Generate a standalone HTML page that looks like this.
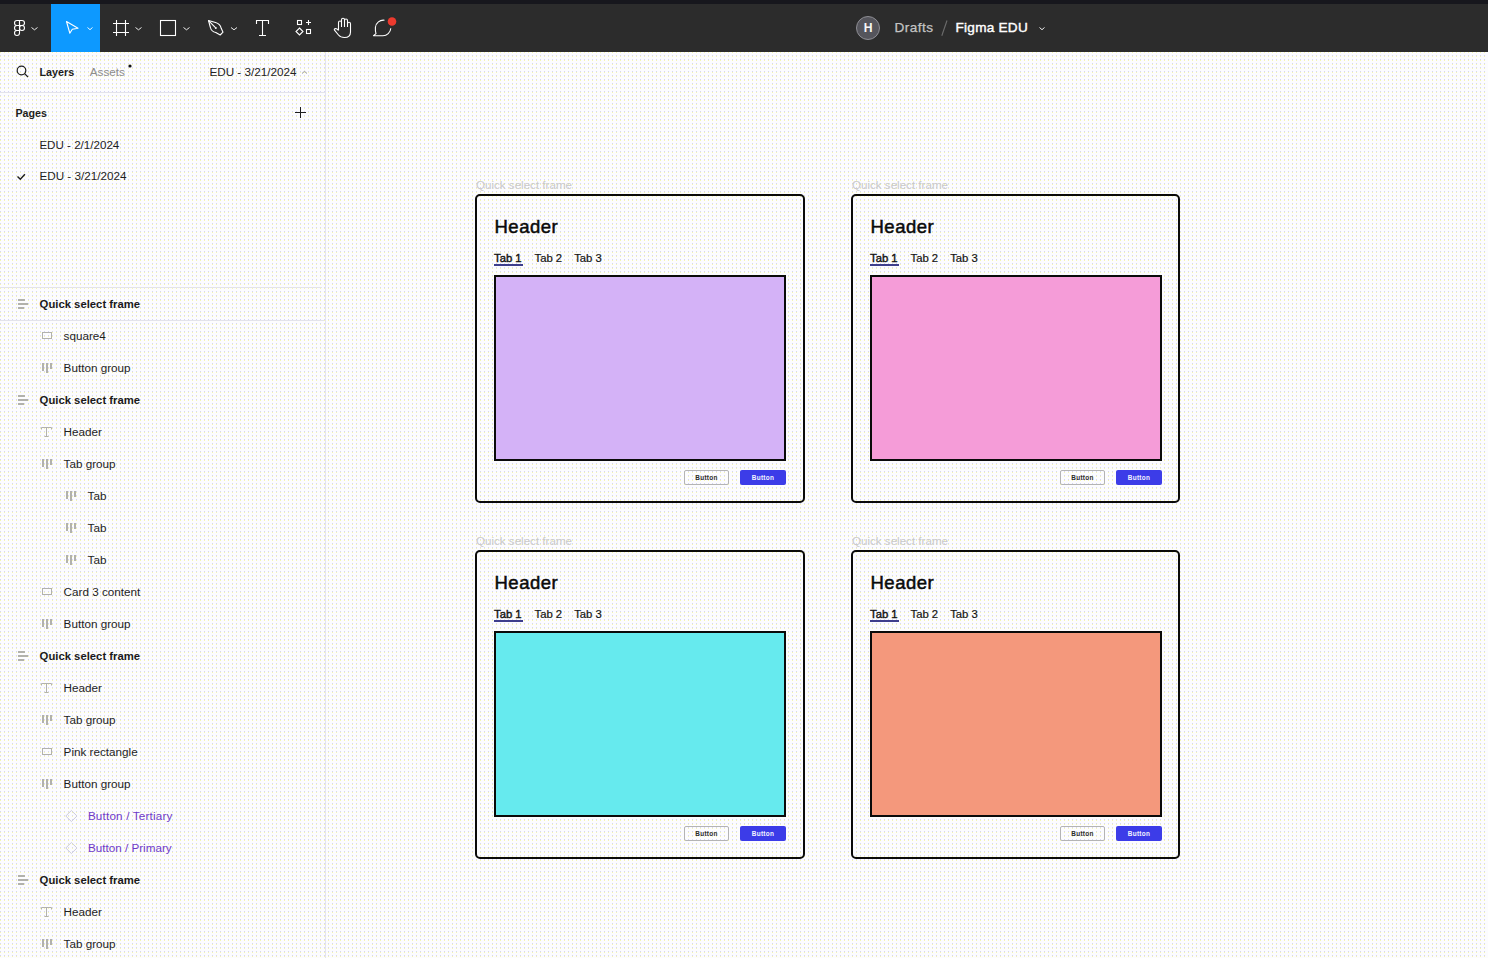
<!DOCTYPE html>
<html><head><meta charset="utf-8">
<style>
*{margin:0;padding:0;box-sizing:border-box}
html,body{width:1488px;height:958px;overflow:hidden;background:#fcfcfe;font-family:"Liberation Sans",sans-serif;position:relative}
.abs{position:absolute}
.t{position:absolute;white-space:nowrap;line-height:1}
.hl{position:absolute;height:1px;background:#e3e3ea}
.card{position:absolute;width:330px;height:310px;border:2px solid #0a0a0a;border-radius:5px}
.hdr{position:absolute;white-space:nowrap;font-size:18.5px;font-weight:normal;-webkit-text-stroke:.5px #0a0a0a;color:#0a0a0a;line-height:1;letter-spacing:.5px}
.tab{position:absolute;white-space:nowrap;font-size:11.3px;color:#141414;line-height:1;-webkit-text-stroke:.2px #141414}
.tab.b1{-webkit-text-stroke:.4px #141414}
.ul{position:absolute;width:29px;height:1.5px;background:#3e3e8c}
.rect{position:absolute;width:292px;height:186px;border:2px solid #0a0a0a}
.btn3{position:absolute;width:45px;height:15px;border:1px solid #b4b4b4;border-radius:2px;background:transparent;font-size:6.4px;font-weight:bold;color:#2a2a2a;text-align:center;line-height:13px;letter-spacing:.3px}
.btn1{position:absolute;width:46px;height:15px;background:#3c3ce8;border-radius:2px;font-size:6.4px;font-weight:bold;color:#f4f4ff;text-align:center;line-height:15px;letter-spacing:.3px}
</style></head><body>
<svg class="abs" style="left:0;top:0" width="1488" height="958">
<defs><pattern id="dz" x="0" y="0" width="4" height="4" patternUnits="userSpaceOnUse">
<rect x="0" y="3" width="1" height="1" fill="#d4d4f6"/><rect x="0" y="0" width="1" height="1" fill="#f6f6b0"/>
</pattern></defs>
<rect x="0" y="0" width="1488" height="958" fill="url(#dz)"/>
</svg>
<div class="abs" style="left:0;top:0;width:1488px;height:52px;background:#2c2c2c"></div>
<div class="abs" style="left:0;top:0;width:1488px;height:4px;background:#17171d"></div>
<div class="abs" style="left:51px;top:4px;width:49px;height:48px;background:#0d99ff"></div>
<svg class="abs" style="left:0;top:0" width="1488" height="52" fill="none" stroke="#fff" stroke-width="1.1">
<!-- figma logo -->
<path d="M19.5,20.5H17a2.5,2.5 0 0 0 0,5H19.5Z"/>
<path d="M19.5,20.5H22a2.5,2.5 0 0 1 0,5H19.5Z"/>
<path d="M19.5,25.5H17a2.5,2.5 0 0 0 0,5H19.5Z"/>
<circle cx="22" cy="28" r="2.5"/>
<path d="M19.5,30.5H17a2.5,2.5 0 1 0 2.5,2.5Z"/>
<path d="M31.5,27.5l3,2.3l3,-2.3" stroke-width=".9"/>
<!-- select arrow -->
<path d="M66.5,21.5L78,28.3L72.3,29.3L69.8,33.2Z" stroke-linejoin="round"/>
<path d="M87.5,27.5l2.5,2.2l2.5,-2.2" stroke-width=".9"/>
<!-- frame -->
<path d="M116.5,20V36M125.5,20V36M113,23.5H129M113,32.5H129"/>
<path d="M135.5,27.5l3,2.3l3,-2.3" stroke-width=".9"/>
<!-- rect -->
<rect x="160.5" y="20.5" width="15" height="15"/>
<path d="M183.5,27.5l3,2.3l3,-2.3" stroke-width=".9"/>
<!-- pen -->
<path d="M208.5,20.5L215.5,22.5Q220.3,24 221.2,28.3L223,32.2L220.2,35L215.8,32.5Q211.3,31.5 210.4,27.5Z" stroke-linejoin="round"/>
<path d="M208.8,20.8L215.2,27.3"/>
<circle cx="215.8" cy="28" r="1" fill="#fff" stroke="none"/>
<path d="M231,27.5l3,2.3l3,-2.3" stroke-width=".9"/>
<!-- text tool -->
<path d="M256.5,24V20.5H268.5V24M262.5,20.5V35.5M259,35.5H266"/>
<!-- resources -->
<rect x="297.5" y="20.5" width="4" height="4"/>
<path d="M308.5,20V25M306,22.5H311"/>
<path d="M299.5,28L303,31.5L299.5,35L296,31.5Z"/>
<rect x="306.5" y="29.5" width="4" height="4"/>
<!-- hand -->
<path d="M338.5,30.5V22.5a1.5,1.5 0 0 1 3,0V27M341.5,27V19.8a1.5,1.5 0 0 1 3,0V27M344.5,27V20.5a1.5,1.5 0 0 1 3,0V27M347.5,27V23.8a1.5,1.5 0 0 1 3,0V32Q350.5,37.5 344.5,37.5Q340.5,37.5 338.5,35L334.5,30.2Q333.8,28.6 335.6,28.5Q337,28.5 338.5,30.5" stroke-linejoin="round"/>
<!-- comment -->
<path d="M384.5,20.2A8,8 0 0 0 375.4,27.5Q375.2,31.5 376,33.6L373.5,35.7H382.6A7.9,7.9 0 0 0 390.8,28.3" stroke-linejoin="round"/>
<circle cx="392" cy="21.5" r="4.3" fill="#ec3a2e" stroke="none"/>
<!-- avatar -->
<circle cx="868" cy="28" r="11.5" fill="#55555c" stroke="#8e8e94" stroke-width="1"/>
<path d="M1039.5,27.5l2.5,2.2l2.5,-2.2" stroke-width=".9"/>
<path d="M941.8,35.8L947,20.5" stroke="#6c6c6c"/>
</svg>
<div class="t" style="left:863.8px;top:21.97px;font-size:12.2px;font-weight:bold;color:#f6f6f6;">H</div>
<div class="t" style="left:894.5px;top:20.99px;font-size:13.6px;font-weight:normal;color:#c4c4c4;letter-spacing:.45px;-webkit-text-stroke:.25px #c4c4c4">Drafts</div>
<div class="t" style="left:955.5px;top:21.09px;font-size:13.6px;font-weight:normal;color:#ffffff;letter-spacing:.25px;-webkit-text-stroke:.4px #fff">Figma EDU</div>
<div class="abs" style="left:325px;top:52px;width:1px;height:906px;background:#e4e4ee"></div>
<div class="hl" style="left:0;top:92px;width:325px"></div>
<div class="hl" style="left:0;top:287px;width:322px"></div>
<div class="hl" style="left:0;top:320px;width:324px"></div>
<svg class="abs" style="left:0;top:52px" width="325" height="140" fill="none" stroke="#1e1e1e" stroke-width="1.2">
<circle cx="21.5" cy="18.5" r="4.3"/><path d="M24.6,21.6L28,25"/>
<circle cx="130" cy="14" r="1.6" fill="#111" stroke="none"/>
<path d="M302,21.5l2.5,-2.2l2.5,2.2" stroke="#999" stroke-width="1"/>
<path d="M300.5,55V66M295,60.5H306" stroke-width="1"/>
<path d="M17.5,124.5l2.8,2.8l4.6,-5" stroke-width="1.4"/>
</svg>
<div class="t" style="left:39.5px;top:66.96px;font-size:10.8px;font-weight:bold;color:#1e1e1e;">Layers</div>
<div class="t" style="left:89.8px;top:65.90px;font-size:11.7px;font-weight:normal;color:#8c8c8c;">Assets</div>
<div class="t" style="left:209.4px;top:65.80px;font-size:11.7px;font-weight:normal;color:#222;">EDU - 3/21/2024</div>
<div class="t" style="left:15.4px;top:107.54px;font-size:10.7px;font-weight:bold;color:#1e1e1e;">Pages</div>
<div class="t" style="left:39.4px;top:138.68px;font-size:11.6px;font-weight:normal;color:#1e1e1e;">EDU - 2/1/2024</div>
<div class="t" style="left:39.4px;top:170.30px;font-size:11.7px;font-weight:normal;color:#1e1e1e;">EDU - 3/21/2024</div>
<div class="t" style="left:39.6px;top:298.93px;font-size:11.3px;font-weight:bold;color:#1a1a1a;">Quick select frame</div>
<div class="t" style="left:63.6px;top:329.60px;font-size:11.7px;font-weight:normal;color:#1e1e1e;">square4</div>
<div class="t" style="left:63.6px;top:361.60px;font-size:11.7px;font-weight:normal;color:#1e1e1e;">Button group</div>
<div class="t" style="left:39.6px;top:394.93px;font-size:11.3px;font-weight:bold;color:#1a1a1a;">Quick select frame</div>
<div class="t" style="left:63.6px;top:425.60px;font-size:11.7px;font-weight:normal;color:#1e1e1e;">Header</div>
<div class="t" style="left:63.6px;top:457.60px;font-size:11.7px;font-weight:normal;color:#1e1e1e;">Tab group</div>
<div class="t" style="left:87.6px;top:489.60px;font-size:11.7px;font-weight:normal;color:#1e1e1e;">Tab</div>
<div class="t" style="left:87.6px;top:521.60px;font-size:11.7px;font-weight:normal;color:#1e1e1e;">Tab</div>
<div class="t" style="left:87.6px;top:553.60px;font-size:11.7px;font-weight:normal;color:#1e1e1e;">Tab</div>
<div class="t" style="left:63.6px;top:585.60px;font-size:11.7px;font-weight:normal;color:#1e1e1e;">Card 3 content</div>
<div class="t" style="left:63.6px;top:617.60px;font-size:11.7px;font-weight:normal;color:#1e1e1e;">Button group</div>
<div class="t" style="left:39.6px;top:650.93px;font-size:11.3px;font-weight:bold;color:#1a1a1a;">Quick select frame</div>
<div class="t" style="left:63.6px;top:681.60px;font-size:11.7px;font-weight:normal;color:#1e1e1e;">Header</div>
<div class="t" style="left:63.6px;top:713.60px;font-size:11.7px;font-weight:normal;color:#1e1e1e;">Tab group</div>
<div class="t" style="left:63.6px;top:745.60px;font-size:11.7px;font-weight:normal;color:#1e1e1e;">Pink rectangle</div>
<div class="t" style="left:63.6px;top:777.60px;font-size:11.7px;font-weight:normal;color:#1e1e1e;">Button group</div>
<div class="t" style="left:87.9px;top:809.80px;font-size:11.7px;font-weight:normal;color:#6f3ac8;letter-spacing:.18px">Button / Tertiary</div>
<div class="t" style="left:87.9px;top:841.80px;font-size:11.7px;font-weight:normal;color:#6f3ac8;">Button / Primary</div>
<div class="t" style="left:39.6px;top:874.93px;font-size:11.3px;font-weight:bold;color:#1a1a1a;">Quick select frame</div>
<div class="t" style="left:63.6px;top:905.60px;font-size:11.7px;font-weight:normal;color:#1e1e1e;">Header</div>
<div class="t" style="left:63.6px;top:937.60px;font-size:11.7px;font-weight:normal;color:#1e1e1e;">Tab group</div>
<svg class="abs" style="left:0;top:0" width="325" height="958" fill="#b2b2ac"><rect x="18" y="299" width="7" height="2"/><rect x="18" y="303" width="10" height="2"/><rect x="18" y="307" width="6" height="2"/><rect x="42.5" y="332.5" width="9" height="6" fill="none" stroke="#b2b2ac" stroke-width="1"/><rect x="42" y="363" width="2" height="8"/><rect x="46" y="363" width="2" height="10"/><rect x="50" y="363" width="2" height="6"/><rect x="18" y="395" width="7" height="2"/><rect x="18" y="399" width="10" height="2"/><rect x="18" y="403" width="6" height="2"/><path d="M41.5,429.5V427.5H51.5V429.5M46.5,427.5V436.5M44.5,436.5H48.5" fill="none" stroke="#b2b2ac" stroke-width="1"/><rect x="42" y="459" width="2" height="8"/><rect x="46" y="459" width="2" height="10"/><rect x="50" y="459" width="2" height="6"/><rect x="66" y="491" width="2" height="8"/><rect x="70" y="491" width="2" height="10"/><rect x="74" y="491" width="2" height="6"/><rect x="66" y="523" width="2" height="8"/><rect x="70" y="523" width="2" height="10"/><rect x="74" y="523" width="2" height="6"/><rect x="66" y="555" width="2" height="8"/><rect x="70" y="555" width="2" height="10"/><rect x="74" y="555" width="2" height="6"/><rect x="42.5" y="588.5" width="9" height="6" fill="none" stroke="#b2b2ac" stroke-width="1"/><rect x="42" y="619" width="2" height="8"/><rect x="46" y="619" width="2" height="10"/><rect x="50" y="619" width="2" height="6"/><rect x="18" y="651" width="7" height="2"/><rect x="18" y="655" width="10" height="2"/><rect x="18" y="659" width="6" height="2"/><path d="M41.5,685.5V683.5H51.5V685.5M46.5,683.5V692.5M44.5,692.5H48.5" fill="none" stroke="#b2b2ac" stroke-width="1"/><rect x="42" y="715" width="2" height="8"/><rect x="46" y="715" width="2" height="10"/><rect x="50" y="715" width="2" height="6"/><rect x="42.5" y="748.5" width="9" height="6" fill="none" stroke="#b2b2ac" stroke-width="1"/><rect x="42" y="779" width="2" height="8"/><rect x="46" y="779" width="2" height="10"/><rect x="50" y="779" width="2" height="6"/><path d="M71.4,810.5L77,816L71.4,821.5L65.8,816Z" fill="none" stroke="#cdcddd" stroke-width="1"/><path d="M71.4,842.5L77,848L71.4,853.5L65.8,848Z" fill="none" stroke="#cdcddd" stroke-width="1"/><rect x="18" y="875" width="7" height="2"/><rect x="18" y="879" width="10" height="2"/><rect x="18" y="883" width="6" height="2"/><path d="M41.5,909.5V907.5H51.5V909.5M46.5,907.5V916.5M44.5,916.5H48.5" fill="none" stroke="#b2b2ac" stroke-width="1"/><rect x="42" y="939" width="2" height="8"/><rect x="46" y="939" width="2" height="10"/><rect x="50" y="939" width="2" height="6"/></svg>
<div class="t" style="left:476px;top:178.98px;font-size:11.6px;font-weight:normal;color:#c9c9c9;">Quick select frame</div>
<div class="card" style="left:475px;top:194px;width:330px;height:309px"></div>
<div class="hdr" style="left:494.5px;top:217.83px">Header</div>
<div class="tab b1" style="left:494px;top:252.63px">Tab 1</div>
<div class="tab" style="left:534.5px;top:252.63px">Tab 2</div>
<div class="tab" style="left:574.2px;top:252.63px">Tab 3</div>
<div class="ul" style="left:494px;top:264.2px"></div>
<div class="rect" style="left:494px;top:275px;background:#d4b2f7"></div>
<div class="btn3" style="left:684px;top:470px">Button</div>
<div class="btn1" style="left:740px;top:470px">Button</div>
<div class="t" style="left:852px;top:178.98px;font-size:11.6px;font-weight:normal;color:#c9c9c9;">Quick select frame</div>
<div class="card" style="left:851px;top:194px;width:329px;height:309px"></div>
<div class="hdr" style="left:870.5px;top:217.83px">Header</div>
<div class="tab b1" style="left:870px;top:252.63px">Tab 1</div>
<div class="tab" style="left:910.5px;top:252.63px">Tab 2</div>
<div class="tab" style="left:950.2px;top:252.63px">Tab 3</div>
<div class="ul" style="left:870px;top:264.2px"></div>
<div class="rect" style="left:870px;top:275px;background:#f59cd8"></div>
<div class="btn3" style="left:1060px;top:470px">Button</div>
<div class="btn1" style="left:1116px;top:470px">Button</div>
<div class="t" style="left:476px;top:534.98px;font-size:11.6px;font-weight:normal;color:#c9c9c9;">Quick select frame</div>
<div class="card" style="left:475px;top:550px;width:330px;height:309px"></div>
<div class="hdr" style="left:494.5px;top:573.83px">Header</div>
<div class="tab b1" style="left:494px;top:608.63px">Tab 1</div>
<div class="tab" style="left:534.5px;top:608.63px">Tab 2</div>
<div class="tab" style="left:574.2px;top:608.63px">Tab 3</div>
<div class="ul" style="left:494px;top:620.2px"></div>
<div class="rect" style="left:494px;top:631px;background:#66eaee"></div>
<div class="btn3" style="left:684px;top:826px">Button</div>
<div class="btn1" style="left:740px;top:826px">Button</div>
<div class="t" style="left:852px;top:534.98px;font-size:11.6px;font-weight:normal;color:#c9c9c9;">Quick select frame</div>
<div class="card" style="left:851px;top:550px;width:329px;height:309px"></div>
<div class="hdr" style="left:870.5px;top:573.83px">Header</div>
<div class="tab b1" style="left:870px;top:608.63px">Tab 1</div>
<div class="tab" style="left:910.5px;top:608.63px">Tab 2</div>
<div class="tab" style="left:950.2px;top:608.63px">Tab 3</div>
<div class="ul" style="left:870px;top:620.2px"></div>
<div class="rect" style="left:870px;top:631px;background:#f4987c"></div>
<div class="btn3" style="left:1060px;top:826px">Button</div>
<div class="btn1" style="left:1116px;top:826px">Button</div>
</body></html>
